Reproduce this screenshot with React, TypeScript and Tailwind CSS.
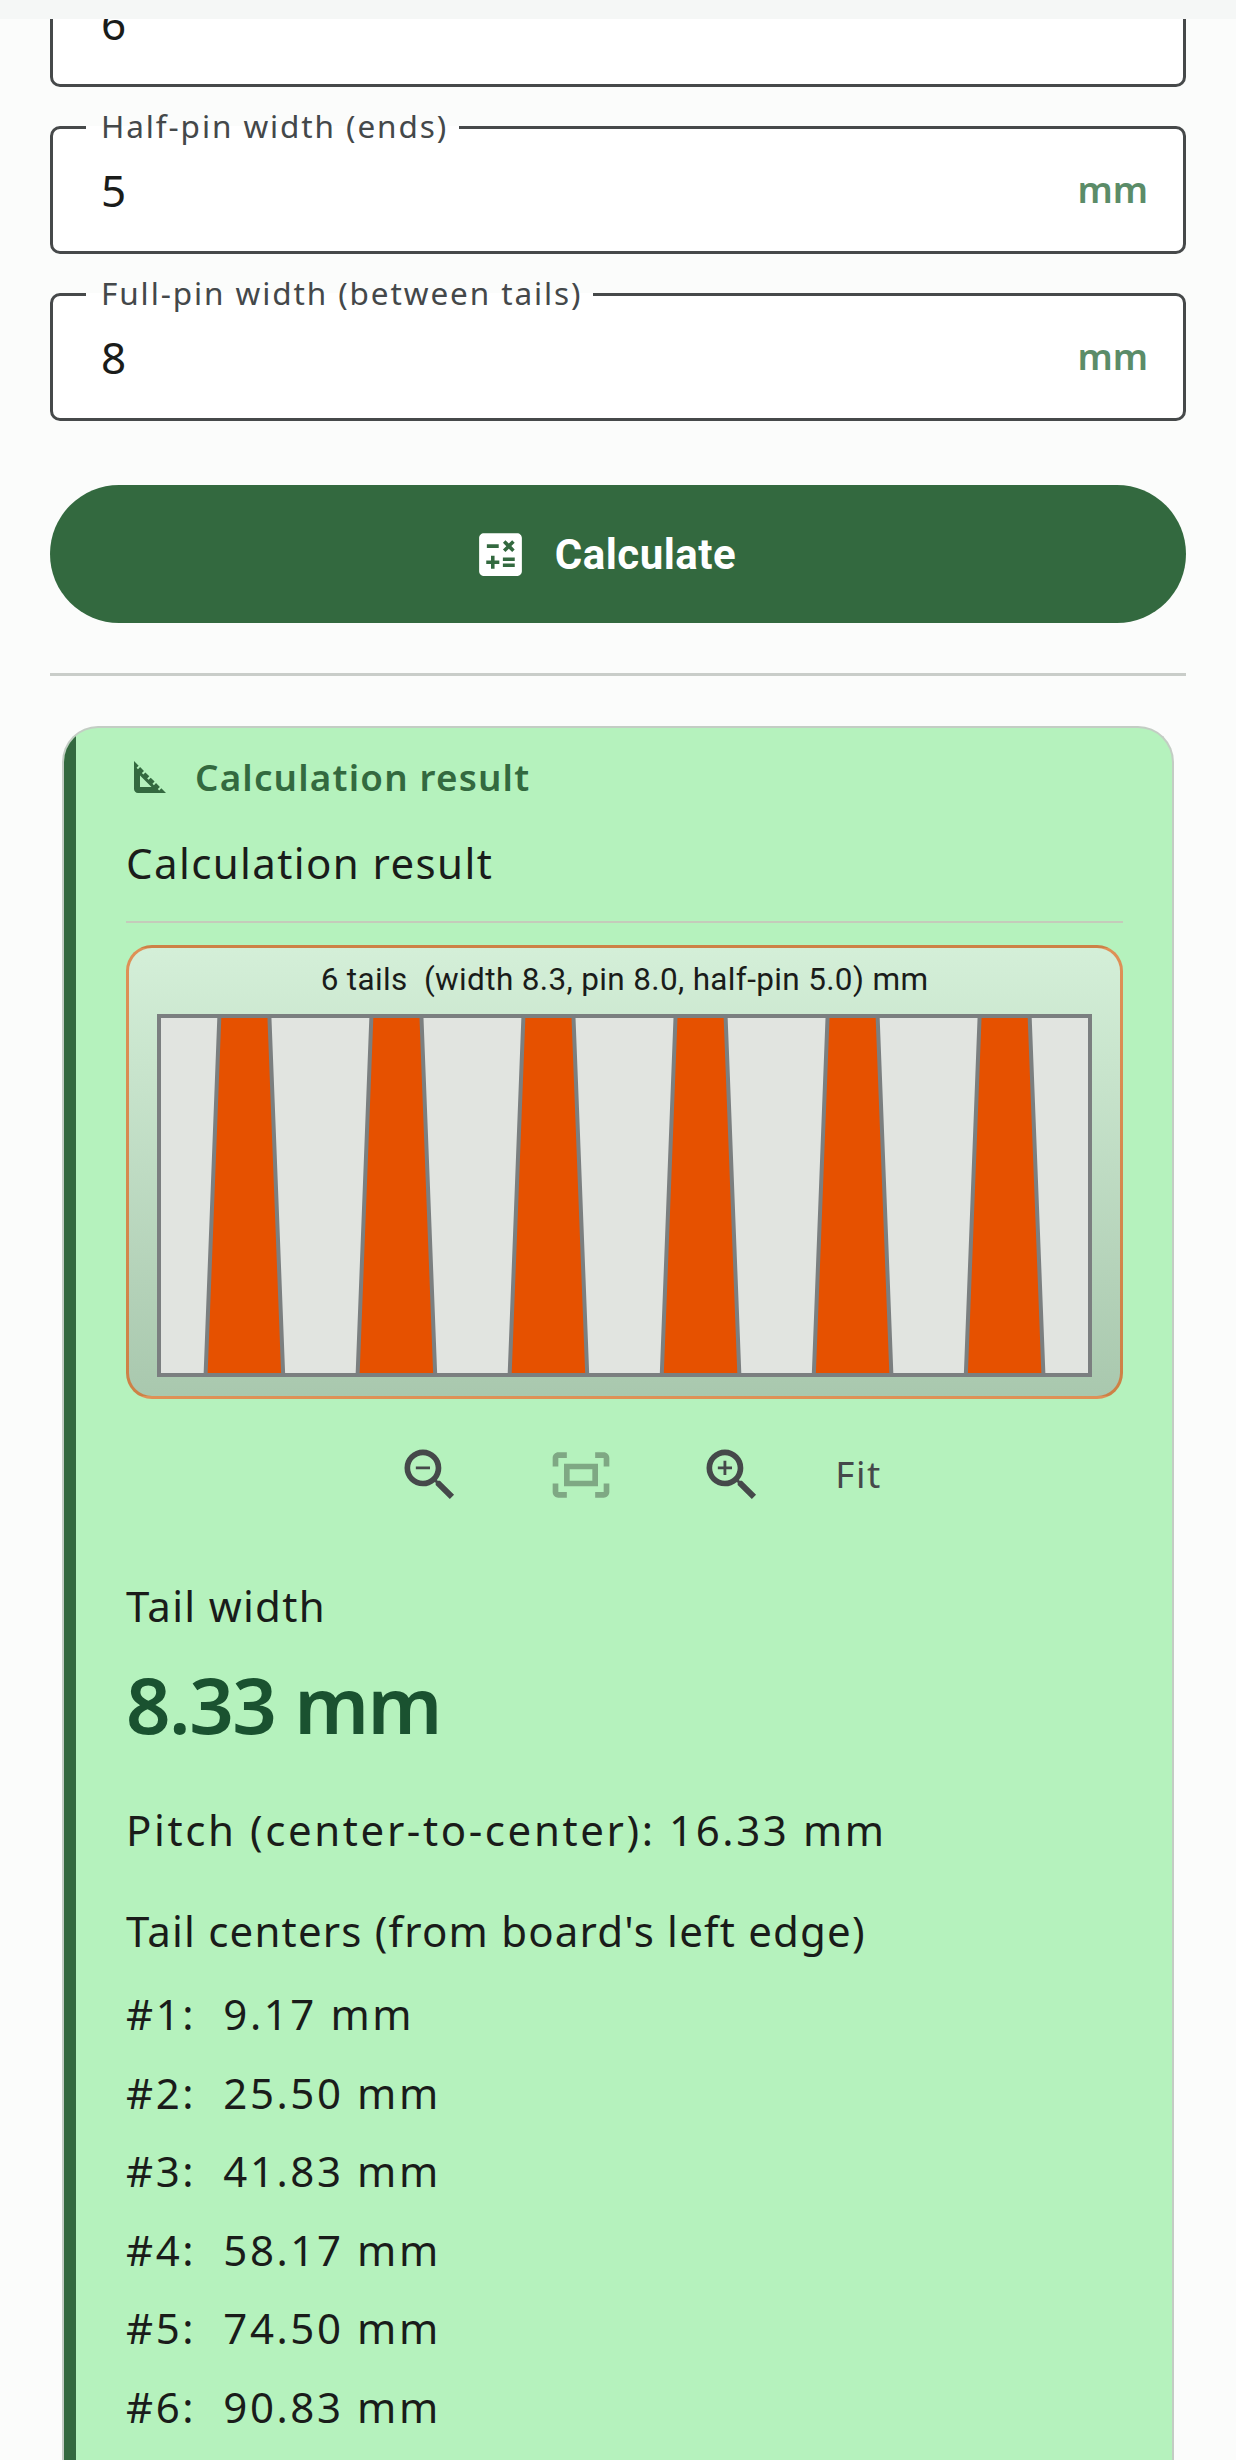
import { MdCalculate, MdOutlineFitScreen, MdSquareFoot, MdZoomIn, MdZoomOut } from "react-icons/md";

const centers = [
  { n: 1, mm: 9.17, label: "9.17 mm" },
  { n: 2, mm: 25.5, label: "25.50 mm" },
  { n: 3, mm: 41.83, label: "41.83 mm" },
  { n: 4, mm: 58.17, label: "58.17 mm" },
  { n: 5, mm: 74.5, label: "74.50 mm" },
  { n: 6, mm: 90.83, label: "90.83 mm" },
];

function Field({ label, value, unit }: { label?: string; value: string; unit?: string }) {
  return (
    <fieldset className="h-[128px] rounded-[10px] border-[3px] border-[#46494a] bg-white">
      {label && (
        <legend className="ml-[33px] flex h-[3px] items-center pr-[11px] pb-[3px] pl-[15px] text-[31.5px] tracking-[1.9px] whitespace-nowrap text-[#44484a]">
          {label}
        </legend>
      )}
      <div className="flex h-[122px] items-center justify-between pr-[35px] pl-[48px]">
        <span className="text-[44px] text-[#1a1c1a]">{value}</span>
        {unit && <span className="text-[36.75px] font-semibold text-[#5b8c68]">{unit}</span>}
      </div>
    </fieldset>
  );
}

function DovetailChart() {
  return (
    <div className="flex h-[454px] flex-col items-center rounded-[26px] border-[3px] border-[#e65100]/60 bg-linear-to-b from-[#d4efd8] to-[#a9c8ae]">
      <div className="flex h-[64px] items-center font-['Roboto'] text-[31.5px] tracking-[0.35px] whitespace-pre text-[#1a1c1a]">
        6 tails  (width 8.3, pin 8.0, half-pin 5.0) mm
      </div>
      <svg width="940" height="367" viewBox="155 1011 940 367">
        <rect x="159" y="1015" width="931" height="359" fill="#e1e4e0" stroke="#7b7f80" strokeWidth="4" />
        {centers.map((c) => {
          const x = 159 + 9.31 * c.mm;
          return (
            <polygon
              key={c.n}
              points={`${x - 25},1015 ${x + 25},1015 ${x + 38.8},1374 ${x - 38.8},1374`}
              fill="#e65100"
              stroke="#7b7f80"
              strokeWidth="4"
            />
          );
        })}
      </svg>
    </div>
  );
}

export default function App() {
  return (
    <div className="flex h-[2460px] flex-col overflow-hidden bg-[#fbfcfb] font-['Noto_Sans',sans-serif]">
      <div className="relative z-10 h-[19px] shrink-0 bg-[#f5f7f6]" />
      <main className="-mt-[60px] px-[50px]">
        <Field value="6" />
        <div className="mt-[39px]">
          <Field label="Half-pin width (ends)" value="5" unit="mm" />
        </div>
        <div className="mt-[39px]">
          <Field label="Full-pin width (between tails)" value="8" unit="mm" />
        </div>

        <button className="mt-[64px] flex h-[138px] w-full items-center justify-center gap-[26px] rounded-full bg-[#33693f] pr-[28px] font-['Roboto'] text-[42px] font-bold tracking-[0.5px] text-white">
          <MdCalculate size={57} />
          Calculate
        </button>

        <div className="mt-[50px] h-[3px] bg-[#c9cdc9]" />

        <section className="mx-[12px] mt-[50px] overflow-hidden rounded-t-[36px] border-x-2 border-t-2 border-[#c3cdc4] bg-[#b5f2bd]">
          <div className="border-l-[12px] border-[#33693f] pr-[49px] pb-[200px] pl-[50px]">
            <div className="flex h-[73px] items-end gap-[21px] text-[36.75px] font-semibold tracking-[1.2px] text-[#33693f]">
              <MdSquareFoot size={48} />
              <span className="leading-[48px]">Calculation result</span>
            </div>
            <h2 className="mt-[34px] text-[42px] leading-[56px] tracking-[1.4px] text-[#1a1c1a]">Calculation result</h2>
            <div className="mt-[30px] mb-[22px] h-[2px] bg-[#c5cbbb]" />

            <DovetailChart />

            <div className="mt-[13px] flex items-center justify-center gap-[25px] text-[#45494a]">
              <button className="flex size-[126px] items-center justify-center">
                <MdZoomOut size={68} />
              </button>
              <button className="flex size-[126px] items-center justify-center text-[#7fa884]">
                <MdOutlineFitScreen size={68} />
              </button>
              <button className="flex size-[126px] items-center justify-center">
                <MdZoomIn size={68} />
              </button>
              <span className="ml-[15px] text-[36.75px] tracking-[1.5px]">Fit</span>
            </div>

            <div className="mt-[40px] text-[42px] leading-[56px] tracking-[1.3px] text-[#1a1c1a]">Tail width</div>
            <div className="mt-[20px] text-[78px] leading-[100px] font-semibold tracking-[-1.5px] text-[#1a5230]">8.33 mm</div>
            <div className="mt-[48px] text-[42px] leading-[56px] tracking-[2.6px] text-[#1a1c1a]">
              Pitch (center-to-center): 16.33 mm
            </div>
            <div className="mt-[45px] text-[42px] leading-[56px] tracking-[1.2px] text-[#1a1c1a]">
              Tail centers (from board's left edge)
            </div>
            <ul className="mt-[27px] flex flex-col gap-[22.5px] text-[42px] leading-[56px] tracking-[2.6px] text-[#1a1c1a]">
              {centers.map((c) => (
                <li key={c.n} className="whitespace-pre">{`#${c.n}:  ${c.label}`}</li>
              ))}
            </ul>
          </div>
        </section>
      </main>
    </div>
  );
}
